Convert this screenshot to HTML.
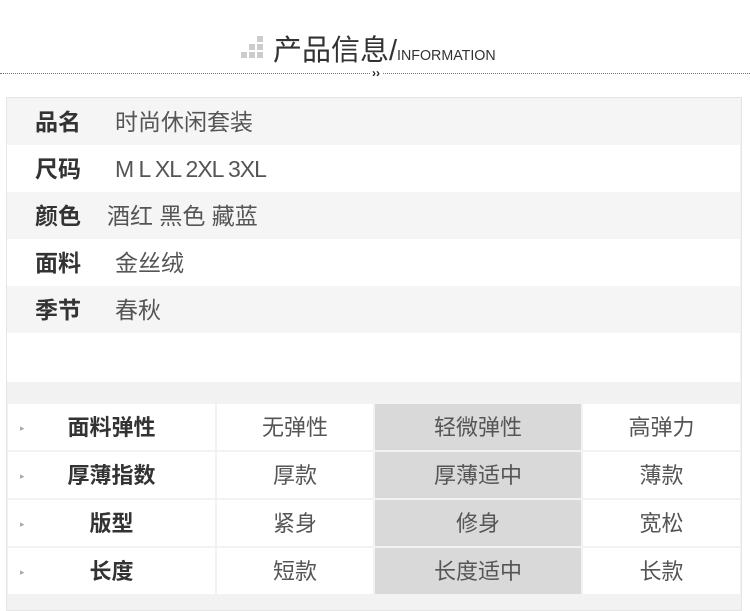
<!DOCTYPE html><html><head><meta charset="utf-8"><style>
body{margin:0;width:750px;height:609px;background:#fff;position:relative;overflow:hidden;font-family:"Liberation Sans","Noto Sans CJK SC",sans-serif;color:#444}
.a{position:absolute}
.r{position:absolute;left:7px;width:733px;height:47px;line-height:49px;font-size:23px}
.r b{position:absolute;left:28px;color:#333}
.r span{position:absolute;left:108px;color:#555}
.c{position:absolute;height:46px;line-height:48px;text-align:center;font-size:22px;color:#555;background:#fff}
</style></head><body>
<div class="a" style="left:241px;top:52px;width:6px;height:6px;background:#ccc"></div>
<div class="a" style="left:249px;top:52px;width:6px;height:6px;background:#ccc"></div>
<div class="a" style="left:257px;top:52px;width:6px;height:6px;background:#ccc"></div>
<div class="a" style="left:249px;top:44px;width:6px;height:6px;background:#ccc"></div>
<div class="a" style="left:257px;top:44px;width:6px;height:6px;background:#ccc"></div>
<div class="a" style="left:257px;top:36px;width:6px;height:6px;background:#ccc"></div>
<div class="a" style="left:273px;top:27px;font-size:29px;color:#333;white-space:nowrap">产品信息/<span style="font-size:15px;display:inline-block;transform:scaleX(0.95);transform-origin:left">INFORMATION</span></div>
<div class="a" style="left:0;top:73px;width:750px;border-top:1px dotted #777"></div>
<div class="a" style="left:370px;top:66px;font-size:12px;font-weight:bold;color:#222;background:#fff;padding:0 2px">››</div>
<div class="a" style="left:6px;top:97px;width:734px;height:512px;background:#f2f2f2;border:1px solid #e5e5e5"></div>
<div class="r" style="top:98px;background:#f5f5f5"><b>品名</b><span>时尚休闲套装</span></div>
<div class="r" style="top:145px;background:#fff"><b>尺码</b><span style="letter-spacing:-1px">M L XL 2XL 3XL</span></div>
<div class="r" style="top:192px;background:#f5f5f5"><b>颜色</b><span style="left:100px">酒红 黑色 藏蓝</span></div>
<div class="r" style="top:239px;background:#fff"><b>面料</b><span>金丝绒</span></div>
<div class="r" style="top:286px;background:#f5f5f5"><b>季节</b><span>春秋</span></div>
<div class="r" style="top:333px;height:49px;background:#fff"></div>

<div class="c" style="left:8px;top:404px;width:207px"><span style="position:absolute;left:12px;font-size:9px;color:#aaa">▸</span><b style="color:#333">面料弹性</b></div>
<div class="c" style="left:217px;top:404px;width:156px">无弹性</div>
<div class="c" style="left:375px;top:404px;width:206px;background:#d9d9d9">轻微弹性</div>
<div class="c" style="left:583px;top:404px;width:157px">高弹力</div>

<div class="c" style="left:8px;top:452px;width:207px"><span style="position:absolute;left:12px;font-size:9px;color:#aaa">▸</span><b style="color:#333">厚薄指数</b></div>
<div class="c" style="left:217px;top:452px;width:156px">厚款</div>
<div class="c" style="left:375px;top:452px;width:206px;background:#d9d9d9">厚薄适中</div>
<div class="c" style="left:583px;top:452px;width:157px">薄款</div>

<div class="c" style="left:8px;top:500px;width:207px"><span style="position:absolute;left:12px;font-size:9px;color:#aaa">▸</span><b style="color:#333">版型</b></div>
<div class="c" style="left:217px;top:500px;width:156px">紧身</div>
<div class="c" style="left:375px;top:500px;width:206px;background:#d9d9d9">修身</div>
<div class="c" style="left:583px;top:500px;width:157px">宽松</div>

<div class="c" style="left:8px;top:548px;width:207px"><span style="position:absolute;left:12px;font-size:9px;color:#aaa">▸</span><b style="color:#333">长度</b></div>
<div class="c" style="left:217px;top:548px;width:156px">短款</div>
<div class="c" style="left:375px;top:548px;width:206px;background:#d9d9d9">长度适中</div>
<div class="c" style="left:583px;top:548px;width:157px">长款</div>
</body></html>
